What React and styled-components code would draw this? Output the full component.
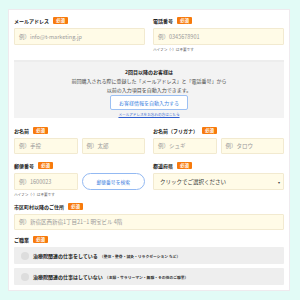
import React from "react";
import styled, { createGlobalStyle } from "styled-components";

const Global = createGlobalStyle`
  html, body { margin: 0; padding: 0; background: #e2fbf6; }
  body { font-family: "Noto Sans CJK JP", "Noto Sans", sans-serif; color: #333; }
  * { box-sizing: border-box; }
`;

const Page = styled.div`
  width: 300px;
  height: 300px;
  padding: 9px 10px 9px 8px;
`;

const Card = styled.div`
  background: #fff;
  border: 1px solid #efeaee;
  height: 282px;
  padding: 6px 5px 0 5px;
  display: flex;
  flex-direction: column;
`;

const Row = styled.div`
  display: grid;
  grid-template-columns: 1fr 1fr;
  column-gap: 8px;
  margin-top: ${(p) => p.$mt || 0}px;
`;

const Field = styled.div`
  display: flex;
  flex-direction: column;
`;

const LabelRow = styled.div`
  display: flex;
  align-items: center;
  gap: 4px;
  height: 9px;
  margin-bottom: ${(p) => p.$mb ?? 3}px;
`;

const Label = styled.span`
  font-size: 5px;
  font-weight: 700;
  color: #222;
  line-height: 1;
`;

const Badge = styled.span`
  background: #f77a0c;
  color: #fff;
  font-size: 4.5px;
  font-weight: 700;
  line-height: 7px;
  height: 7px;
  padding: 0 3px;
  border-radius: 1px;
`;

const Input = styled.div`
  height: ${(p) => p.$h || 17}px;
  background: #fffbe7;
  border: 1px solid #f2ead0;
  border-radius: 1px;
  display: flex;
  align-items: center;
  padding-left: 4px;
  font-size: 5.5px;
  color: #9a9a9a;
  white-space: nowrap;
  overflow: hidden;
`;

const Pair = styled.div`
  display: grid;
  grid-template-columns: 1fr 1fr;
  gap: 4px;
`;

const Hint = styled.div`
  font-size: 3.6px;
  color: #555;
  margin-top: 2px;
  line-height: 5px;
`;

const InfoBox = styled.div`
  margin-top: 8px;
  background: #f3f3f3;
  border-top: 2px solid #ededed;
  height: 58px;
  display: flex;
  flex-direction: column;
  align-items: center;
  padding-top: 6px;
`;

const InfoTitle = styled.div`
  font-size: 5px;
  font-weight: 700;
  color: #222;
  line-height: 8px;
`;

const InfoText = styled.div`
  font-size: 5px;
  color: #444;
  line-height: 9px;
`;

const AutoButton = styled.div`
  margin-top: 1px;
  width: 78px;
  height: 15px;
  background: #fff;
  border: 1px solid #9cc0f3;
  border-radius: 2px;
  display: flex;
  align-items: center;
  justify-content: center;
  font-size: 5px;
  color: #3d7fe0;
`;

const InfoLink = styled.div`
  margin-top: 2px;
  font-size: 3.6px;
  color: #2f5fd0;
  text-decoration: underline;
  line-height: 5px;
`;

const PillButton = styled.div`
  height: 17px;
  border: 1px solid #93b9f2;
  border-radius: 9px;
  background: #fff;
  display: flex;
  align-items: center;
  justify-content: center;
  font-size: 4.8px;
  color: #3d7fe0;
`;

const Select = styled(Input)`
  color: #333;
  justify-content: space-between;
  padding-right: 3px;
  padding-left: 6px;
  font-size: 5.5px;
`;

const Caret = styled.span`
  font-size: 4px;
  color: #444;
`;

const FullField = styled.div`
  margin-top: ${(p) => p.$mt || 0}px;
  display: flex;
  flex-direction: column;
`;

const RadioList = styled.div`
  display: flex;
  flex-direction: column;
  gap: 4px;
`;

const RadioRow = styled.div`
  height: 17px;
  background: #eeeeee;
  border-radius: 1px;
  display: flex;
  align-items: center;
  padding-left: 7px;
  gap: 4px;
`;

const RadioDot = styled.span`
  width: 8px;
  height: 8px;
  border-radius: 50%;
  background: #dddddd;
  flex: none;
`;

const RadioText = styled.span`
  font-size: 5px;
  font-weight: 700;
  color: #222;
  white-space: nowrap;
`;

const RadioSub = styled.span`
  font-size: 3.8px;
  font-weight: 700;
  color: #333;
  margin-left: 2px;
`;

function FieldLabel({ children, mb }) {
  return (
    <LabelRow $mb={mb}>
      <Label>{children}</Label>
      <Badge>必須</Badge>
    </LabelRow>
  );
}

export default function App() {
  return (
    <>
      <Global />
      <Page>
        <Card>
          <Row>
            <Field>
              <FieldLabel>メールアドレス</FieldLabel>
              <Input>例）info@t-marketing.jp</Input>
            </Field>
            <Field>
              <FieldLabel>電話番号</FieldLabel>
              <Input>例）0345678901</Input>
              <Hint>ハイフン（-）は不要です</Hint>
            </Field>
          </Row>

          <InfoBox>
            <InfoTitle>2回目以降のお客様は</InfoTitle>
            <InfoText>前回購入される際に登録した「メールアドレス」と「電話番号」から</InfoText>
            <InfoText>以前の入力項目を自動入力できます。</InfoText>
            <AutoButton>お客様情報を自動入力する</AutoButton>
            <InfoLink>メールアドレスをお忘れの方はこちら</InfoLink>
          </InfoBox>

          <Row $mt={8}>
            <Field>
              <FieldLabel mb={3}>お名前</FieldLabel>
              <Pair>
                <Input $h={16}>例）手投</Input>
                <Input $h={16}>例）太郎</Input>
              </Pair>
            </Field>
            <Field>
              <FieldLabel mb={3}>お名前（フリガナ）</FieldLabel>
              <Pair>
                <Input $h={16}>例）シュギ</Input>
                <Input $h={16}>例）タロウ</Input>
              </Pair>
            </Field>
          </Row>

          <Row $mt={7}>
            <Field>
              <FieldLabel>郵便番号</FieldLabel>
              <Pair>
                <Input>例）1600023</Input>
                <PillButton>郵便番号を検索</PillButton>
              </Pair>
              <Hint>ハイフン（-）は不要です</Hint>
            </Field>
            <Field>
              <FieldLabel>都道府県</FieldLabel>
              <Select>
                <span>クリックでご選択ください</span>
                <Caret>▾</Caret>
              </Select>
            </Field>
          </Row>

          <FullField $mt={5}>
            <FieldLabel mb={3}>市区町村以降のご住所</FieldLabel>
            <Input $h={16}>例）新宿区西新宿1丁目21−1 明宝ビル 4階</Input>
          </FullField>

          <FullField $mt={5}>
            <FieldLabel mb={3}>ご職業</FieldLabel>
            <RadioList>
              <RadioRow>
                <RadioDot />
                <RadioText>
                  治療院関連の仕事をしている
                  <RadioSub>（整体・整骨・鍼灸・リラクゼーション など）</RadioSub>
                </RadioText>
              </RadioRow>
              <RadioRow>
                <RadioDot />
                <RadioText>
                  治療院関連の仕事はしていない
                  <RadioSub>（主婦・サラリーマン・無職・その他のご職業）</RadioSub>
                </RadioText>
              </RadioRow>
            </RadioList>
          </FullField>
        </Card>
      </Page>
    </>
  );
}
